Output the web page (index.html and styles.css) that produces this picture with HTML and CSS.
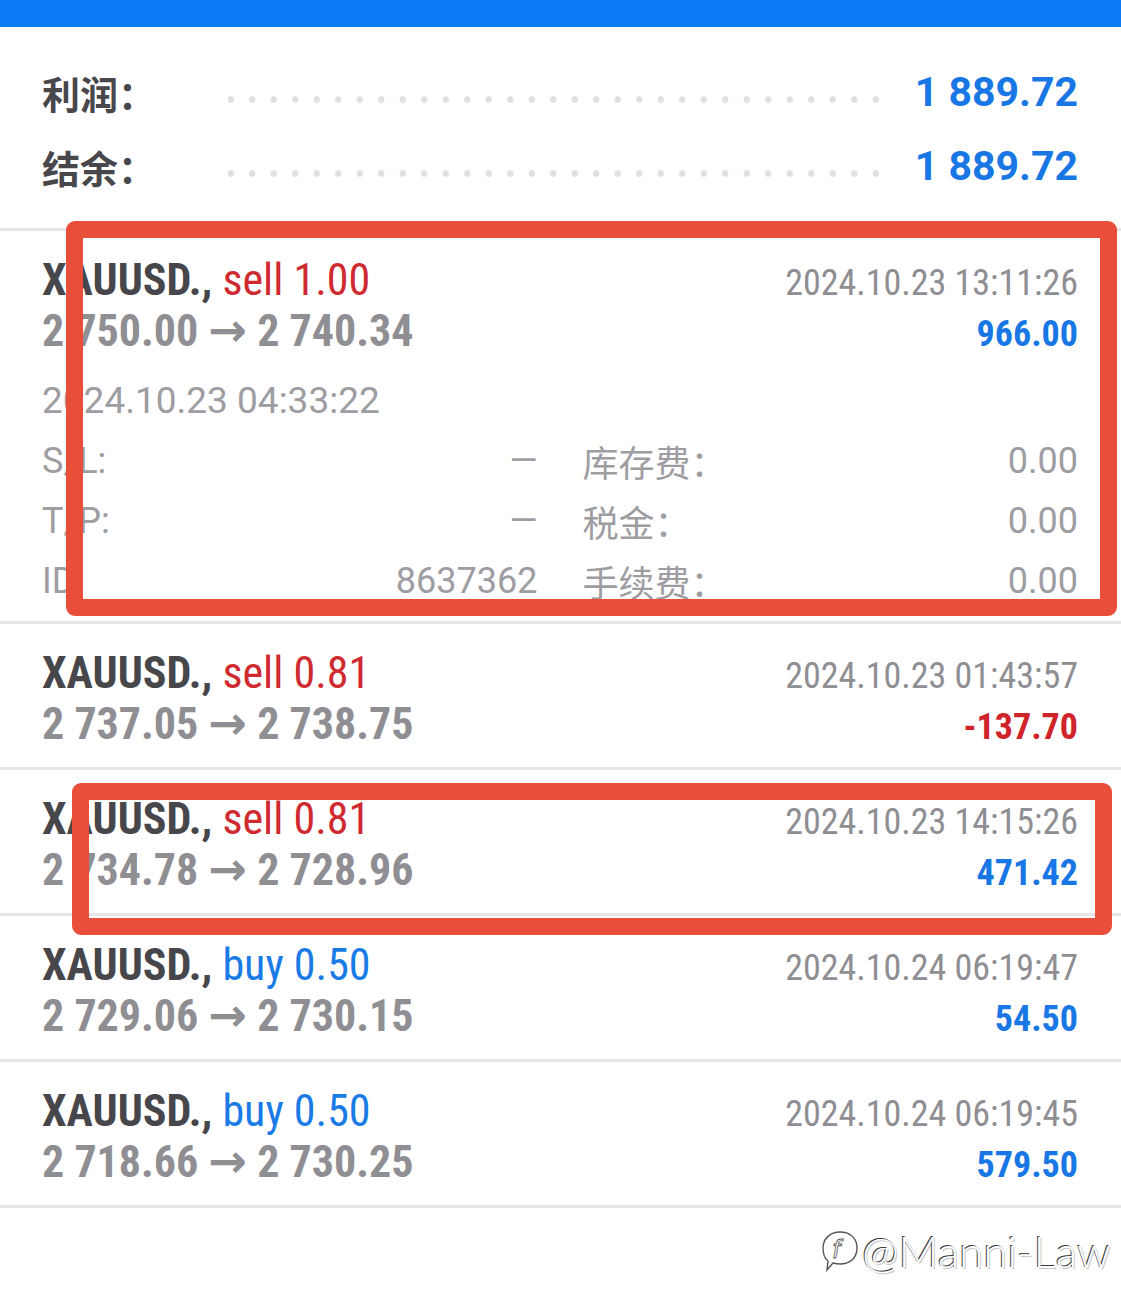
FILE: index.html
```html
<!DOCTYPE html>
<html lang="zh-CN">
<head>
<meta charset="utf-8">
<title>历史</title>
<link rel="stylesheet" href="styles.css">
</head>
<body>
<div class="page">
  <div class="topbar"></div>

  <section class="summary">
    <div class="sum-row">
      <span class="sum-label">利润：</span>
      <span class="dots"></span>
      <span class="sum-value">1 889.72</span>
    </div>
    <div class="sum-row">
      <span class="sum-label">结余：</span>
      <span class="dots"></span>
      <span class="sum-value">1 889.72</span>
    </div>
  </section>

  <section class="trade open">
    <div class="line">
      <span class="title"><b class="sym">XAUUSD.,</b> <span class="sell">sell 1.00</span></span>
      <span class="date">2024.10.23 13:11:26</span>
    </div>
    <div class="line">
      <span class="prices">2 750.00 <span class="arrow">→</span> 2 740.34</span>
      <span class="profit pos">966.00</span>
    </div>
    <div class="details">
      <div class="cell"><span class="opendate">2024.10.23 04:33:22</span></div>
      <div class="cell"></div>
      <div class="cell"><span>S/L:</span><span>—</span></div>
      <div class="cell"><span class="cjk">库存费：</span><span>0.00</span></div>
      <div class="cell"><span>T/P:</span><span>—</span></div>
      <div class="cell"><span class="cjk">税金：</span><span>0.00</span></div>
      <div class="cell"><span>ID:</span><span>8637362</span></div>
      <div class="cell"><span class="cjk">手续费：</span><span>0.00</span></div>
    </div>
  </section>

  <section class="trade">
    <div class="line">
      <span class="title"><b class="sym">XAUUSD.,</b> <span class="sell">sell 0.81</span></span>
      <span class="date">2024.10.23 01:43:57</span>
    </div>
    <div class="line">
      <span class="prices">2 737.05 <span class="arrow">→</span> 2 738.75</span>
      <span class="profit neg">-137.70</span>
    </div>
  </section>

  <section class="trade">
    <div class="line">
      <span class="title"><b class="sym">XAUUSD.,</b> <span class="sell">sell 0.81</span></span>
      <span class="date">2024.10.23 14:15:26</span>
    </div>
    <div class="line">
      <span class="prices">2 734.78 <span class="arrow">→</span> 2 728.96</span>
      <span class="profit pos">471.42</span>
    </div>
  </section>

  <section class="trade">
    <div class="line">
      <span class="title"><b class="sym">XAUUSD.,</b> <span class="buy">buy 0.50</span></span>
      <span class="date">2024.10.24 06:19:47</span>
    </div>
    <div class="line">
      <span class="prices">2 729.06 <span class="arrow">→</span> 2 730.15</span>
      <span class="profit pos">54.50</span>
    </div>
  </section>

  <section class="trade">
    <div class="line">
      <span class="title"><b class="sym">XAUUSD.,</b> <span class="buy">buy 0.50</span></span>
      <span class="date">2024.10.24 06:19:45</span>
    </div>
    <div class="line">
      <span class="prices">2 718.66 <span class="arrow">→</span> 2 730.25</span>
      <span class="profit pos">579.50</span>
    </div>
  </section>

  <div class="mark mark-1"></div>
  <div class="mark mark-2"></div>

  <div class="watermark">
    <svg class="wm-icon" width="40" height="46" viewBox="0 0 40 46">
      <path d="M20 4 C31 4 37 11 37 20 C37 30 30 36 20 36 C17 36 15 35.5 13 35 L7 42 L8 33 C4 30 3 25 3 20 C3 11 10 4 20 4 Z" fill="none" stroke="#555" stroke-width="1.4"/>
      <text x="12" y="30" class="wm-f">f</text>
    </svg>
    <span class="wm-text">@Manni-Law</span>
  </div>
</div>
</body>
</html>
```
FILE: styles.css
```css
* { box-sizing: border-box; }

html, body {
  margin: 0;
  padding: 0;
  background: #ffffff;
}

.page {
  position: relative;
  width: 1121px;
  min-height: 1311px;
  background: #ffffff;
  font-family: Roboto, "Noto Sans CJK SC", sans-serif;
}

.topbar {
  height: 27px;
  background: #0a7af5;
}

/* summary */
.summary {
  padding: 28px 43px 25px 42px;
  border-bottom: 3px solid #e6e6e8;
}

.sum-row {
  display: flex;
  align-items: center;
  height: 74px;
}

.sum-label {
  flex: 0 0 186px;
  font-family: "Noto Sans CJK SC", sans-serif;
  font-weight: 700;
  font-size: 38px;
  color: #47474c;
}

.dots {
  flex: 1;
  height: 7px;
  margin: 14px 34px 0 0;
  background: radial-gradient(circle, #e0e0e2 3px, rgba(255,255,255,0) 3.6px) -8px 0 / 21.5px 7px repeat-x;
}

.sum-value {
  font-family: Roboto, sans-serif;
  font-weight: 700;
  font-size: 41px;
  color: #1877e4;
}

/* trades */
.trade {
  padding: 24px 43px 19px 42px;
  border-bottom: 3px solid #e6e6e8;
}

.trade.open {
  padding-bottom: 10px;
}

.line {
  display: flex;
  justify-content: space-between;
  align-items: baseline;
  height: 50px;
  line-height: 50px;
  font-family: "Roboto Condensed", "Liberation Sans Narrow", "DejaVu Sans Condensed", Roboto, sans-serif;
}

.title {
  font-size: 44px;
}

.sym {
  font-weight: 700;
  color: #46464b;
}

.sell { color: #cf2a2f; }
.buy { color: #1a7be6; }

.date {
  font-size: 36px;
  color: #8e8e93;
}

.prices {
  font-size: 44px;
  font-weight: 700;
  color: #8e8e93;
}

.arrow {
  font-family: "DejaVu Sans", sans-serif;
  font-weight: 700;
  font-size: 46px;
}

.profit {
  font-size: 36px;
  font-weight: 700;
}

.profit.pos { color: #1877e4; }
.profit.neg { color: #d0242b; }

.details {
  margin-top: 16px;
  display: grid;
  grid-template-columns: 1fr 1fr;
  column-gap: 45px;
  font-family: Roboto, "Noto Sans CJK SC", sans-serif;
  font-size: 36px;
  color: #9d9da2;
}

.cell {
  display: flex;
  justify-content: space-between;
  align-items: center;
  height: 60px;
  line-height: 60px;
  white-space: nowrap;
}

.opendate {
  font-size: 37px;
}

.cjk {
  font-family: "Noto Sans CJK SC", sans-serif;
  font-size: 36px;
}

/* red highlight boxes overlaying the list */
.mark {
  position: absolute;
  border: 17px solid #e94e3b;
  border-radius: 9px;
  pointer-events: none;
}

.mark-1 {
  left: 66px;
  top: 221px;
  width: 1051px;
  height: 395px;
}

.mark-2 {
  left: 72px;
  top: 783px;
  width: 1040px;
  height: 152px;
}

/* watermark */
.watermark {
  position: absolute;
  left: 820px;
  top: 1226px;
  display: flex;
  align-items: center;
  gap: 2px;
}

.wm-f {
  font-family: "DejaVu Sans", sans-serif;
  font-style: italic;
  font-size: 24px;
  fill: #ffffff;
  stroke: #555;
  stroke-width: 0.8px;
}

.wm-text {
  font-family: Lato, sans-serif;
  font-weight: 300;
  font-size: 44px;
  line-height: 50px;
  color: #ffffff;
  text-shadow: -1px -1px 0 #3a3a3a, 1px 1px 0 #c8c8c8;
}
```
